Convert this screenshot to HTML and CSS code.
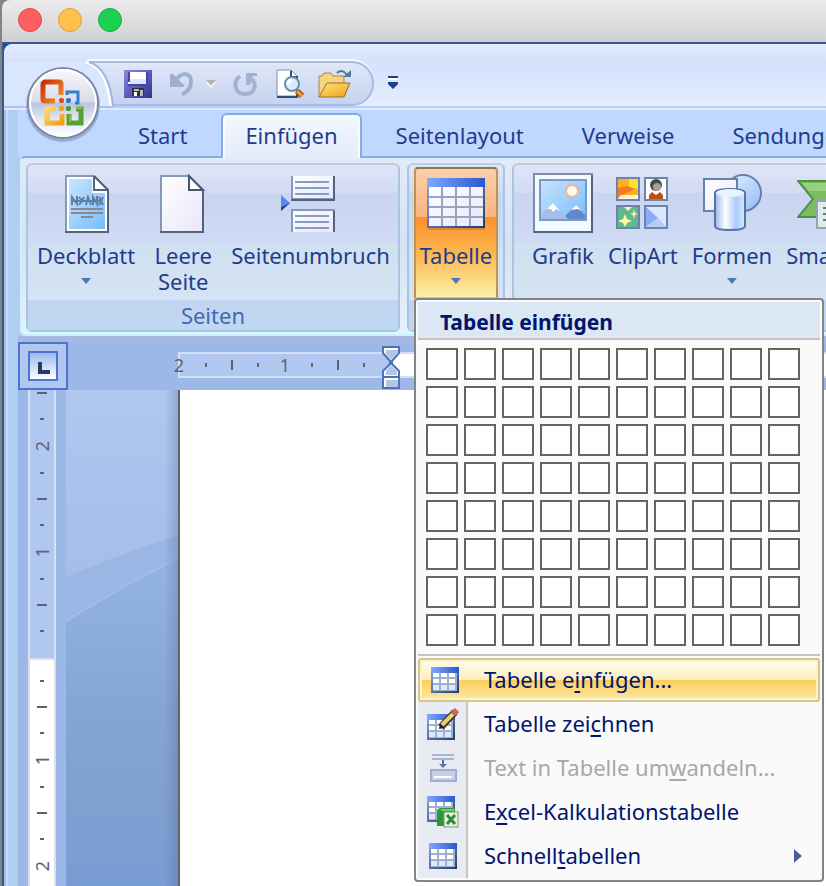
FILE: index.html
```html
<!DOCTYPE html>
<html lang="de">
  <head>
    <meta charset="UTF-8" />
    <meta name="viewport" content="width=device-width, initial-scale=1.0" />
    <title>Tabelle einfügen</title>
    <link rel="stylesheet" href="styles.css">
  </head>
  <body>
    <svg class="defs" width="0" height="0" aria-hidden="true">
      <defs>
        <linearGradient id="paper" x1="0" y1="0" x2="1" y2="1"><stop offset="0" stop-color="#fff" /><stop offset="1" stop-color="#e8e6fa" /></linearGradient>
        <linearGradient id="sky" x1="0" y1="0" x2="1" y2="1"><stop offset="0" stop-color="#c8e4fc" /><stop offset="1" stop-color="#78bcfc" /></linearGradient>
        <linearGradient id="bluebar" x1="0" x2="1"><stop offset="0" stop-color="#80a8ff" /><stop offset="1" stop-color="#2858d0" /></linearGradient>
        <linearGradient id="edge" x1="0" y1="0" x2="1" y2="1"><stop offset="0" stop-color="#90a8e0" /><stop offset="1" stop-color="#203c64" /></linearGradient>
        <linearGradient id="cyl" x1="0" x2="1"><stop offset="0" stop-color="#98b8ec" /><stop offset=".35" stop-color="#fff" /><stop offset=".7" stop-color="#a8ccfa" /><stop offset="1" stop-color="#d8e8ff" /></linearGradient>
        <linearGradient id="ball" x1="0" y1="0" x2="1" y2="1"><stop offset="0" stop-color="#e4f0ff" /><stop offset="1" stop-color="#90bcf8" /></linearGradient>
        <linearGradient id="gold" x1="0" y1="0" x2="1" y2="1"><stop offset="0" stop-color="#ffe680" /><stop offset="1" stop-color="#f0a010" /></linearGradient>
        <linearGradient id="disk" x1="0" x2="1" y2="1"><stop offset="0" stop-color="#8888e4" /><stop offset="1" stop-color="#303090" /></linearGradient>
        <symbol id="small-table" viewBox="0 0 28 26">
          <rect width="28" height="26" fill="url(#edge)" />
          <rect width="28" height="6" fill="url(#bluebar)" />
          <rect x="2" y="6" width="24" height="18" fill="#a0b0d0" />
          <path fill="#fff" d="M2 6h6v4H2zM10 6h6v4h-6zM18 6h6v4h-6zM2 12h6v4H2zM10 12h6v4h-6zM18 12h6v4h-6z" />
          <path fill="#dce8fc" d="M2 18h6v5H2zM10 18h6v5h-6zM18 18h6v5h-6z" />
        </symbol>
      </defs>
    </svg>

    <div class="window">
      <header class="titlebar">
        <button class="light red" aria-label="Schließen"></button>
        <button class="light yellow" aria-label="Minimieren"></button>
        <button class="light green" aria-label="Vollbild"></button>
      </header>

      <div class="app">
        <div class="quick">
          <div class="qat">
            <button aria-label="Speichern">
              <svg width="28" height="28" viewBox="0 0 28 28">
                <rect width="28" height="28" fill="url(#disk)" />
                <path fill="#4444b0" d="M4 2h20v14H4z" />
                <path fill="#fff" d="M6 2h16v12H4v-2h2z" />
                <path fill="#e0e4ff" d="M6 9h16v5H6z" />
                <path fill="#333" d="M8 18h12v8H8z" />
                <path fill="#bbb" d="M10 19h5v2h-5zM16 20h3v6h-3z" />
                <path fill="#fff" d="M10 22h3v4h-3z" />
              </svg>
            </button>
            <button class="undo" aria-label="Rückgängig">
              <svg width="24" height="26" viewBox="0 0 24 26" fill="none" stroke="#a0afcf">
                <path stroke-width="4" d="M6 9c5-8 16-8 15 2 0 6-3 10-9 12" />
                <path fill="#a0afcf" stroke="none" d="M0 3h3l11 11v2H0z" />
              </svg>
            </button>
            <button class="more" aria-label="Rückgängig-Liste">
              <svg width="10" height="8" viewBox="0 0 10 8"><path fill="#fff" d="M0 2h10L5 8z" /><path fill="#b4b4b8" d="M0 0h10L5 6z" /></svg>
            </button>
            <button class="redo" aria-label="Wiederholen">
              <svg width="26" height="26" viewBox="0 0 26 26" fill="none" stroke="#a4b2d0">
                <path stroke-width="4" d="M7 5C-1 11 2 23 12 23c10 0 12-9 7-15" />
                <path fill="#a4b2d0" stroke="none" d="M13 2h11v3h-4l-3 9h-4z" />
              </svg>
            </button>
            <button class="preview" aria-label="Seitenansicht">
              <svg width="30" height="30" viewBox="0 0 30 30">
                <path fill="#fff" stroke="#8090a8" stroke-width="1" d="M1 1h14l6 6v20H1z" />
                <path fill="none" stroke="#304c70" stroke-width="2" d="M15 2v6h7M21 8v20H1" />
                <path stroke="#a05818" stroke-width="6" d="M21 22l5 5" />
                <path stroke="#f4a030" stroke-width="3" d="M21 22l5 5" />
                <circle cx="16" cy="15" r="7" fill="#d8ecff" stroke="#7088a8" stroke-width="2" />
                <path fill="none" stroke="#fff" stroke-width="3" d="M12 15q0-4 4-4" />
              </svg>
            </button>
            <button aria-label="Öffnen">
              <svg width="34" height="30" viewBox="0 0 34 30">
                <path fill="#f4d480" stroke="#a88848" d="M1 28V7h3l2-3h7l2 3h11v7" />
                <path fill="url(#gold)" stroke="#98702c" d="M1 28l8-14h23l-6 14z" />
                <path fill="none" stroke="#587898" stroke-width="2" d="M19 4q5-5 10 2" />
                <path fill="#587898" d="M33 1v7h-8z" />
              </svg>
            </button>
          </div>
          <button class="customize" aria-label="Symbolleiste anpassen">
            <svg width="12" height="14" viewBox="0 0 12 14"><path fill="#15428b" d="M1 0h10v2H1zM1 6h10v2L6 13 1 8z" /><path fill="#fff" d="M1 2h10v2H1z" /></svg>
          </button>
        </div>

        <button class="office" aria-label="Office-Schaltfläche">
          <svg width="116" height="90" viewBox="0 0 116 90">
            <defs>
              <linearGradient id="orb" x1="0" y1="0" x2="0" y2="1">
                <stop offset="0" stop-color="#f8f8fc" /><stop offset=".48" stop-color="#dcdce8" /><stop offset=".5" stop-color="#b8c4dc" /><stop offset=".75" stop-color="#e4eaf4" /><stop offset="1" stop-color="#fff" />
              </linearGradient>
              <linearGradient id="red" x1="0" x2="1" y2="1"><stop offset="0" stop-color="#c83008" /><stop offset="1" stop-color="#f89030" /></linearGradient>
              <linearGradient id="yellow" x1="0" x2="1" y2="1"><stop offset="0" stop-color="#ffd868" /><stop offset="1" stop-color="#f0a010" /></linearGradient>
            </defs>
            <path fill="#d8e6fe" d="M0 2h84Q104 4 108 46H0z" />
            <path fill="none" stroke="#fff" stroke-width="3" d="M82 2q20 4 25 44" />
            <path fill="none" stroke="#9cb6e0" stroke-width="2" d="M85 2q20 6 24 44" />
            <path stroke="#a8c4f4" stroke-width="2" d="M0 47h26M96 47h14" />
            <circle cx="59" cy="45" r="37" fill="#6878a0" opacity=".45" />
            <circle cx="59" cy="43" r="35" fill="url(#orb)" stroke="#7c88a8" stroke-width="2" />
            <circle cx="59" cy="43" r="33" fill="none" stroke="#fff" stroke-width="2" />
            <path fill="none" stroke="url(#red)" stroke-width="5" d="M51 41H41q-2 0-2-2V25q0-3 3-3h13q2 0 2 2v11" />
            <path fill="none" stroke="#2c80d0" stroke-width="3" d="M63 35v-3h11v11h-3" />
            <path fill="none" stroke="url(#yellow)" stroke-width="5" d="M51 49h-8v14h15V54" />
            <path fill="none" stroke="#58a030" stroke-width="5" d="M72 49h5v14H65V54" />
            <path fill="none" stroke="#b0dc70" stroke-width="1" d="M72 48h6M66 55v7" />
            <rect x="55" y="38" width="5" height="5" rx="2" fill="#e04818" />
            <rect x="62" y="38" width="5" height="5" rx="2" fill="#2878c8" />
            <rect x="55" y="46" width="5" height="5" rx="2" fill="#f49828" />
            <rect x="62" y="46" width="5" height="5" rx="2" fill="#489838" />
          </svg>
        </button>

        <nav class="tabs">
          <button>Start</button>
          <button class="active">Einfügen</button>
          <button>Seitenlayout</button>
          <button>Verweise</button>
          <button>Sendungen</button>
        </nav>

        <div class="ribbon">
          <section class="group">
            <div class="tools">
              <button class="tool">
                <svg width="60" height="62" viewBox="0 0 60 62">
                  <path fill="#fff" stroke="#8898b8" stroke-width="2" d="M10 4h28l14 14v42H10z" />
                  <path fill="url(#sky)" d="M13 7h23v14h13v36H13z" />
                  <path fill="none" stroke="#50647c" stroke-width="2" d="M38 4v14h14v42H9M38 4l14 14" />
                  <path fill="#fff" d="M39 7l10 10H39z" />
                  <path fill="none" stroke="#6080a0" stroke-width="2" d="M16 33v-8l5 7v-8M23 25l3 4 2-4M26 29l-3 4M30 33l2-8 3 8M37 33v-8l4 7v-8M43 25l4 8M47 25l-4 8M16 29h30" />
                  <path stroke="#8c8890" stroke-width="2" d="M15 37h32M15 41h32M25 45h12" />
                </svg>
                <span>Deckblatt</span>
                <i class="arrow"></i>
              </button>
              <button class="tool">
                <svg width="60" height="62" viewBox="0 0 60 62">
                  <path fill="url(#paper)" stroke="#8898b8" stroke-width="2" d="M8 4h28l14 14v42H8z" />
                  <path fill="#fff" stroke="#405870" stroke-width="2" d="M36 4v14h14z" />
                  <path fill="none" stroke="#50647c" stroke-width="2" d="M50 18v42H7" />
                </svg>
                <span>Leere<br>Seite</span>
              </button>
              <button class="tool">
                <svg width="60" height="62" viewBox="0 0 60 62">
                  <path fill="url(#paper)" stroke="#8898b8" stroke-width="2" d="M11 4v23h42V4" />
                  <path fill="none" stroke="#50647c" stroke-width="2" d="M10 28h43V4" />
                  <path fill="url(#paper)" stroke="#8898b8" stroke-width="2" d="M11 60V38h42v22" />
                  <path stroke="#50647c" stroke-width="2" d="M53 39v21" />
                  <path stroke="#849cc8" stroke-width="2" d="M14 10h34M14 16h34M14 22h34M14 44h34M14 50h34M14 56h34" />
                  <path fill="#5888f0" d="M0 23l9 8-9 8z" />
                  <path fill="#2848a0" d="M0 39l9-8-9 4z" />
                </svg>
                <span>Seitenumbruch</span>
              </button>
            </div>
            <h2>Seiten</h2>
          </section>

          <section class="group tables">
            <div class="tools">
              <button class="tool pressed" aria-expanded="true">
                <svg width="60" height="62" viewBox="0 0 60 62">
                  <rect x="3" y="8" width="56" height="50" fill="#a06828" opacity=".4" />
                  <rect x="1" y="6" width="58" height="50" fill="url(#edge)" />
                  <rect x="1" y="6" width="58" height="9" fill="url(#bluebar)" />
                  <rect x="3" y="15" width="54" height="39" fill="url(#paper)" />
                  <path stroke="#98a4c0" stroke-width="2" d="M16 15v39M30 15v39M44 15v39M3 25h54M3 35h54M3 45h54" />
                </svg>
                <span>Tabelle</span>
                <i class="arrow"></i>
              </button>
            </div>
            <h2></h2>
            <div class="menu">
              <h3>Tabelle einfügen</h3>
              <div class="cells"></div>
              <button class="item hot">
                <svg width="28" height="26"><use href="#small-table" /></svg>
                <span>Tabelle e<u>i</u>nfügen...</span>
              </button>
              <button class="item">
                <svg width="32" height="32" viewBox="0 0 32 32">
                  <use href="#small-table" x="0" y="6" width="28" height="26" />
                  <path stroke="#403828" stroke-width="7" d="M14 19L28 4" />
                  <path stroke="#ecd070" stroke-width="4" d="M15 17L26 6" />
                  <path stroke="#c86858" stroke-width="6" d="M26 6l4-4" />
                  <path fill="#222" d="M12 21l1-5 4 4z" />
                </svg>
                <span>Tabelle zei<u>c</u>hnen</span>
              </button>
              <button class="item" disabled>
                <svg width="28" height="28" viewBox="0 0 28 28">
                  <path stroke="#a8b4d0" stroke-width="2" d="M3 1h22M3 5h22" />
                  <path stroke="#5874a8" stroke-width="2" d="M14 6v7" />
                  <path fill="#5874a8" d="M10 10h8l-4 4z" />
                  <rect x="2" y="16" width="25" height="11" fill="#c8d0e8" stroke="#a0acd0" stroke-width="2" />
                  <path stroke="#fff" stroke-width="2" d="M5 23h18" />
                </svg>
                <span>Text in Tabelle um<u>w</u>andeln...</span>
              </button>
              <button class="item">
                <svg width="32" height="32" viewBox="0 0 32 32">
                  <use href="#small-table" x="0" y="0" width="28" height="26" />
                  <path fill="#289838" d="M10 16q0-4 4-4h14v4H18v14h-8z" />
                  <path fill="#78cc70" d="M14 13h13v2H14z" />
                  <rect x="17" y="16" width="14" height="15" fill="#e4f4d8" stroke="#789878" />
                  <path stroke="#308840" stroke-width="3" d="M20 19l8 9M28 19l-8 9" />
                </svg>
                <span>E<u>x</u>cel-Kalkulationstabelle</span>
              </button>
              <button class="item">
                <svg width="28" height="26"><use href="#small-table" /></svg>
                <span>Schnell<u>t</u>abellen</span>
                <i class="submenu"></i>
              </button>
            </div>
          </section>

          <section class="group pictures">
            <div class="tools">
              <button class="tool">
                <svg width="60" height="62" viewBox="0 0 60 62">
                  <rect x="1" y="2" width="58" height="58" fill="#f0faff" stroke="#7c8cac" stroke-width="2" />
                  <rect x="7" y="8" width="46" height="40" fill="url(#sky)" stroke="#7c98c4" stroke-width="2" />
                  <circle cx="39" cy="19" r="6" fill="#fffce8" stroke="#f4b498" stroke-width="2" />
                  <path fill="#6488cc" d="M29 47l14-14 9 10v4z" />
                  <path fill="#a8bce8" d="M8 47v-4l12-12 15 16z" />
                  <path fill="#fff" d="M14 37l6-6 7 8-4-2-3 3-2-3zM38 38l5-5 6 6-4-2z" />
                  <path fill="none" stroke="#50647c" stroke-width="2" d="M59 3v57H1" />
                </svg>
                <span>Grafik</span>
              </button>
              <button class="tool">
                <svg width="60" height="62" viewBox="0 0 60 62">
                  <g stroke="#6c84ac" stroke-width="2">
                    <rect x="4" y="6" width="22" height="22" fill="#fcb020" />
                    <rect x="32" y="6" width="22" height="22" fill="#fff" />
                    <rect x="4" y="34" width="22" height="22" fill="#60b890" />
                    <rect x="32" y="34" width="22" height="22" fill="#dce8ff" />
                  </g>
                  <path fill="#ffe030" d="M16 7h9v10l-9-2z" /><path fill="#f87820" d="M5 16l9-2 8 3-17 8z" /><path fill="#fff0d8" d="M5 27l3-4h17v4z" />
                  <circle cx="43" cy="13" r="6" fill="#484848" /><circle cx="44" cy="15" r="4" fill="#a0a0a0" /><path fill="#c05010" d="M36 27v-4l3-3 4 3 4-3 3 3v4z" />
                  <path fill="#fff8a0" d="M12 42l2 5 5 2-5 2-2 4-2-4-5-2 5-2zM21 37l1 4 3 1-3 1-1 4-1-4-3-1 3-1zM11 35h8l-4 4z" />
                  <path fill="#88acf8" d="M33 35l12 11-12 9z" /><path fill="#b8ccf8" d="M45 46l8 9H33z" />
                </svg>
                <span>ClipArt</span>
              </button>
              <button class="tool">
                <svg width="60" height="62" viewBox="0 0 60 62">
                  <circle cx="41" cy="21" r="18" fill="url(#ball)" stroke="#6880ac" stroke-width="2" />
                  <rect x="2" y="7" width="33" height="32" fill="url(#paper)" stroke="#6880ac" stroke-width="2" />
                  <path fill="url(#cyl)" stroke="#5874a4" stroke-width="2" d="M13 21v33q0 4 15 4t15-4V21q0-4-15-4t-15 4z" />
                  <ellipse cx="28" cy="21" rx="14" ry="4" fill="#e8f4ff" />
                </svg>
                <span>Formen</span>
                <i class="arrow"></i>
              </button>
              <button class="tool">
                <svg width="72" height="62" viewBox="0 0 72 62">
                  <path fill="#7cbc60" stroke="#509044" stroke-width="2" d="M1 9h64v36H1l15-18z" />
                  <path fill="#98d080" d="M5 11h58v8H12z" />
                  <rect x="20" y="29" width="42" height="27" fill="#e0ece8" stroke="#90a4b8" stroke-width="2" />
                  <path stroke="#607890" stroke-width="2" stroke-dasharray="4 2" d="M26 36h30M26 42h30M26 48h30" />
                </svg>
                <span>SmartArt</span>
              </button>
            </div>
            <h2></h2>
          </section>
        </div>

        <main class="workspace">
          <div class="ruler-top">
            <button class="tabstop" aria-label="Tabstopp links"><span><svg width="12" height="12" viewBox="0 0 12 12"><path fill="#203c68" d="M0 0h4v8h8v4H0z" /></svg></span></button>
            <div class="ruler-h">
              <div class="ticks">
                <b>2</b><i></i><i class="long"></i><i></i><b>1</b><i></i><i class="long"></i><i></i>
              </div>
              <div class="writable">
                <svg class="indent" width="18" height="44" viewBox="0 0 18 44">
                  <path fill="#fff" stroke="#4c74b4" stroke-width="2" d="M1 1h16v6L10 15v3l7 7v17H1V25l7-7v-3L1 7z" />
                  <path fill="#b4c4e4" d="M4 4h12v3l-7 7-5-6zM4 29v-4l5-6 6 6v4zM4 34h12v7H4z" />
                  <path stroke="#4c74b4" stroke-width="2" d="M1 31h16" />
                </svg>
              </div>
            </div>
          </div>
          <div class="below">
            <div class="ruler-v">
              <div class="margin">
                <i class="long"></i><i></i><b>2</b><i></i><i class="long"></i><i></i><b>1</b><i></i><i class="long"></i><i></i>
              </div>
              <div class="body">
                <i></i><i class="long"></i><i></i><b>1</b><i></i><i class="long"></i><i></i><b>2</b>
              </div>
            </div>
            <div class="desk">
              <svg viewBox="0 0 112 496" preserveAspectRatio="none" aria-hidden="true">
                <defs>
                  <linearGradient id="deep" x1="0" y1="0" x2="0" y2="1"><stop offset="0" stop-color="#94b4e4" /><stop offset=".5" stop-color="#84a4d4" /><stop offset=".8" stop-color="#7e9fd0" /><stop offset="1" stop-color="#789cd4" /></linearGradient>
                  <linearGradient id="shade" x1="0" x2="1"><stop offset="0" stop-color="#506090" stop-opacity="0" /><stop offset="1" stop-color="#506090" stop-opacity=".3" /></linearGradient>
                </defs>
                <path fill="#9ab6e4" d="M0 187Q60 162 112 145v351H0z" />
                <path fill="url(#deep)" d="M0 231Q55 197 112 168v328H0z" />
                <path fill="none" stroke="#a4bce8" stroke-width="2" d="M0 231Q55 197 112 168" />
                <rect x="98" width="14" height="496" fill="url(#shade)" />
              </svg>
            </div>
            <div class="page"></div>
          </div>
        </main>
      </div>
    </div>

    <script>
      // table size picker, 10 columns x 8 rows
      const CELLS = document.querySelector(".cells");

      for (let row = 1; row <= 8; row++) {
        for (let col = 1; col <= 10; col++) {
          const cell = document.createElement("button");
          cell.setAttribute("aria-label", `${col}x${row} Tabelle`);
          CELLS.appendChild(cell);
        }
      }
    </script>
  </body>
</html>
```
FILE: styles.css
```css
* {
  margin: 0;
  padding: 0;
  box-sizing: border-box;
}

body {
  font-family: "Noto Sans", "Open Sans", sans-serif;
  font-size: 22px;
  line-height: 26px;
  color: #1e3c8c;
  background-color: #848484;
  overflow: hidden;
}

button {
  font: inherit;
  color: inherit;
  background: none;
  border: none;
}

svg {
  display: block;
  flex: none;
}

.defs {
  position: absolute;
}

.window {
  display: flex;
  flex-direction: column;
  height: 100vh;
  margin-left: 2px;
}

/* title bar */
.titlebar {
  display: flex;
  align-items: center;
  gap: 16px;
  height: 42px;
  padding: 0 16px 2px;
  border-top-left-radius: 8px;
  background: linear-gradient(#ececec, #d0d0d0);
}

.light {
  width: 24px;
  height: 24px;
  border-radius: 50%;
  border: 1px solid;
}
.light.red {
  background-color: #ff5f60;
  border-color: #e0484c;
}
.light.yellow {
  background-color: #ffc04c;
  border-color: #dca038;
}
.light.green {
  background-color: #1dd050;
  border-color: #18ac40;
}

.app {
  position: relative;
  flex: 1;
  display: flex;
  flex-direction: column;
  min-height: 0;
  border-top: 2px solid #345890;
  border-left: 2px solid #345890;
  background-color: #0848a0;
  overflow: hidden;
}
/* window frame left of the ribbon and rulers */
.app::before {
  content: "";
  position: absolute;
  top: 64px;
  bottom: 0;
  left: 0;
  width: 100%;
  background: linear-gradient(90deg, #a4bce4 2px, #c8dcfa 2px, #c8dcfa 4px, #b2cdf2 4px);
}
.quick,
.tabs,
.ribbon,
.workspace {
  position: relative;
}

/* quick access toolbar */
.quick {
  display: flex;
  align-items: flex-start;
  height: 64px;
  padding: 17px 0 0 84px;
  border-bottom: 2px solid #b4d0fa;
  border-top-left-radius: 8px;
  background: linear-gradient(#e6ecff, #d6e2fd 16px, #d8e4fc 30px, #e6eeff);
}

.qat {
  display: flex;
  align-items: center;
  height: 45px;
  padding: 0 20px 0 36px;
  border: 2px solid #a4bce2;
  border-left: none;
  border-radius: 0 22px 22px 0;
  background: linear-gradient(#dfe7f9, #c6d3ef);
  box-shadow: 0 -2px #f4f8ff;
}
.qat .undo {
  margin-left: 18px;
}
.qat .more {
  margin-left: 12px;
}
.qat .redo {
  margin-left: 17px;
}
.qat .preview {
  margin: 0 12px 0 17px;
}

.customize {
  margin: 15px 0 0 13px;
}

.office {
  position: absolute;
  z-index: 4;
  top: 16px;
  left: 0;
}

/* tabs */
.tabs {
  z-index: 3;
  display: flex;
  gap: 10px;
  height: 48px;
  padding: 3px 0 0 110px;
  border-top: 2px solid #e0eaff;
}
.tabs::before {
  content: "";
  position: absolute;
  inset: 0 0 0 14px;
  z-index: -1;
  background-color: #c0d8ff;
}
.tabs button {
  flex: none;
  height: 43px;
  padding: 0 22px 2px;
  border: 2px solid transparent;
  border-bottom: none;
}
.tabs .active {
  height: 45px;
  padding-bottom: 4px;
  border-color: #84ace4;
  border-radius: 6px 6px 0 0;
  background: linear-gradient(#f4f8ff, #e4ebfa);
  box-shadow: inset 2px 2px #f8fcff, inset -2px 0 #f8fcff;
}

/* ribbon */
.ribbon {
  z-index: 2;
  display: flex;
  gap: 7px;
  height: 180px;
  padding: 5px 0 2px 4px;
  margin-left: 16px;
  border: 2px solid #84ace4;
  border-right: none;
  border-left-color: #d0f0fc;
  border-bottom-color: #c4f4ff;
  border-radius: 6px 0 0 6px;
  background: linear-gradient(#e2ecf8, #d4e2f6 50%, #e4f2fe);
}

.group {
  position: relative;
  flex: none;
  display: flex;
  flex-direction: column;
  border: 2px solid #a8c4e0;
  border-top-color: #bccde2;
  border-radius: 6px;
  background: linear-gradient(#e0e4f8, #d2dbf2 28px, #c9d5f0 28px, #cfdbf3 78px, #d0e0f0 80px, #d7e6f5);
}
.group h2 {
  height: 30px;
  padding-top: 2px;
  font-size: 22px;
  font-weight: normal;
  text-align: center;
  color: #4468b4;
  background: linear-gradient(#c2d4f0, #bfd8f0);
}

.tools {
  flex: 1;
  display: flex;
  gap: 2px;
  padding-left: 1px;
}
.tool {
  display: flex;
  flex-direction: column;
  align-items: center;
  padding: 7px 8px 0;
}
.tool span {
  margin-top: 8px;
}

.arrow {
  width: 10px;
  height: 6px;
  margin-top: 10px;
  background-color: #4878b8;
  clip-path: polygon(0 0, 100% 0, 50% 100%);
}

.group.tables {
  z-index: 2;
}
.tables .tools {
  padding: 2px 5px 0;
}
.tool.pressed {
  width: 84px;
  height: 132px;
  padding: 3px 0 0;
  border: 2px solid #c09450;
  border-top-color: #8c7850;
  border-bottom-color: #fcc830;
  border-radius: 4px 4px 0 0;
  background: linear-gradient(#fad0a8, #fcb47c 48px, #fb9030 48px, #fcb850 86px, #fdf0a8);
}

.pictures .tools {
  gap: 0;
  padding-left: 11px;
}
.pictures .tool {
  padding: 7px 7px 0;
}

/* table menu */
.menu {
  position: absolute;
  top: 133px;
  left: 5px;
  width: 410px;
  padding: 2px;
  border: 2px solid #848484;
  border-radius: 4px;
  background-color: #fafafa;
}
.menu h3 {
  height: 38px;
  padding: 7px 22px 0;
  font-size: 21px;
  line-height: 26px;
  color: #00156e;
  border-bottom: 2px solid #c4c4c4;
  background-color: #dbe7f2;
}

.cells {
  display: grid;
  grid-template-columns: repeat(10, 32px);
  gap: 6px;
  padding: 8px;
  margin-bottom: 2px;
  border-bottom: 2px solid #c4c4c4;
}
.cells button {
  height: 32px;
  border: 2px solid #646464;
  background-color: #fff;
}

.item {
  display: grid;
  grid-template-columns: 50px 1fr auto;
  align-items: center;
  width: 100%;
  height: 44px;
  text-align: left;
  color: #00156e;
  background: linear-gradient(90deg, #e8ecf2 48px, #c4c4c4 48px, #c4c4c4 50px, transparent 50px);
}
.item svg {
  justify-self: center;
}
.item span {
  padding: 0 0 2px 16px;
}
.item u {
  text-decoration-thickness: 2px;
  text-underline-offset: 3px;
}
.item:disabled {
  color: #a8a8a8;
}
.item.hot {
  grid-template-columns: 46px 1fr;
  padding: 0 2px;
  border: 2px solid #d8c490;
  border-radius: 3px;
  background: linear-gradient(#fffdf0, #fdecc0 20px, #fbcd58 20px, #fde8a8);
  box-shadow: inset 0 0 0 2px #fff4c4;
}
.submenu {
  width: 8px;
  height: 14px;
  margin-right: 18px;
  background-color: #4c5c9c;
  clip-path: polygon(0 0, 100% 50%, 0 100%);
}

/* rulers and page */
.workspace {
  flex: 1;
  display: flex;
  flex-direction: column;
  min-height: 0;
  margin-left: 14px;
  border-top: 6px solid #a4b8e0;
}

.ruler-top {
  display: flex;
  height: 48px;
  background-color: #9cb8e6;
}

.tabstop {
  width: 50px;
  height: 48px;
  padding: 6px 8px;
  border: 2px solid #4c74d0;
  background-color: #b0c8f0;
}
.tabstop span {
  display: flex;
  align-items: center;
  justify-content: center;
  width: 30px;
  height: 30px;
  padding: 4px 0 0 2px;
  border: 2px solid #4c74d0;
  background: linear-gradient(#9cb8e8, #fff);
}

.ruler-h {
  flex: 1;
  display: flex;
  height: 26px;
  margin: 10px 0 0 110px;
  border: 2px solid #d4def6;
  border-right: none;
  background-color: #b0c8f0;
}
.ticks {
  display: flex;
  margin-left: -15px;
  padding-right: 14px;
}
.writable {
  position: relative;
  flex: 1;
  background-color: #fff;
}
.indent {
  position: absolute;
  top: -8px;
  left: -9px;
}

.ruler-h i,
.ruler-h b,
.ruler-v i,
.ruler-v b {
  flex: none;
  display: flex;
  align-items: center;
  justify-content: center;
  font-size: 18px;
  font-weight: normal;
  color: #606078;
}
.ruler-h i {
  width: 26px;
}
.ruler-h b {
  width: 28px;
}
.ruler-h i::before {
  content: "";
  width: 2px;
  height: 4px;
  background-color: #5c6078;
}
.ruler-h .long::before {
  height: 10px;
}

.below {
  flex: 1;
  display: flex;
  min-height: 0;
}

.ruler-v {
  display: flex;
  flex-direction: column;
  width: 48px;
  padding: 0 10px;
  background-color: #9cb8e6;
  overflow: hidden;
}
.ruler-v .margin,
.ruler-v .body {
  display: flex;
  flex-direction: column;
  flex: none;
  border: solid #d8e0f8;
  border-width: 0 2px 2px;
}
.ruler-v .margin {
  margin-top: -10px;
  padding-bottom: 14px;
  background-color: #b0c8f0;
}
.ruler-v .body {
  flex: 1 0 auto;
  padding-top: 8px;
  border-color: #e0dcf0;
  border-bottom: none;
  background-color: #fff;
}
.ruler-v i {
  height: 26px;
}
.ruler-v b {
  height: 28px;
  transform: rotate(-90deg);
}
.ruler-v i::before {
  content: "";
  width: 4px;
  height: 2px;
  background-color: #5c6078;
}
.ruler-v .long::before {
  width: 10px;
}

.desk {
  width: 112px;
  background: linear-gradient(#b0c8f0, #a6bee8 180px);
}
.desk svg {
  width: 100%;
  height: 100%;
}

.page {
  flex: 1;
  border-left: 2px solid #646464;
  background-color: #fff;
}
```
